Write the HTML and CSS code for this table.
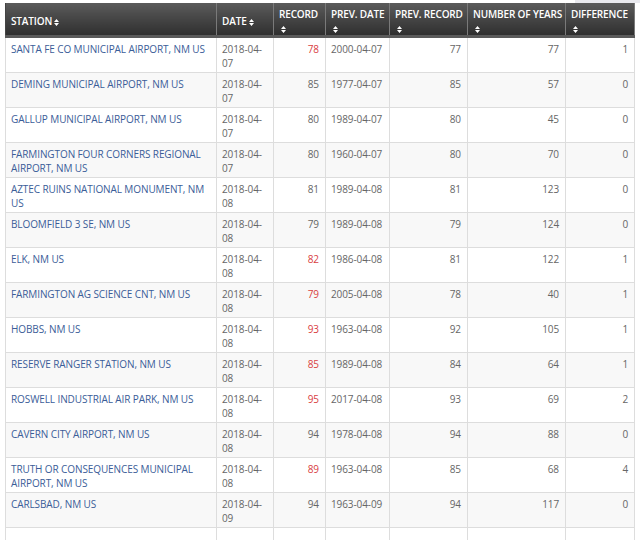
FILE: index.html
```html
<!DOCTYPE html>
<html>
<head>
<meta charset="utf-8">
<link rel="stylesheet" href="styles.css">
</head>
<body>
<div class="topstrip"></div>
<table class="records">
  <colgroup>
    <col class="c-station"><col class="c-date"><col class="c-rec"><col class="c-pdate"><col class="c-prec"><col class="c-years"><col class="c-diff">
  </colgroup>
  <thead>
    <tr>
      <th><span class="lbl">STATION<span class="sort"><svg width="5" height="7" viewBox="0 0 5 7"><path d="M2.5 0 L5 3 H0 Z M0 4 H5 L2.5 7 Z" fill="#fff"/></svg></span></span></th>
      <th><span class="lbl">DATE<span class="sort"><svg width="5" height="7" viewBox="0 0 5 7"><path d="M2.5 0 L5 3 H0 Z M0 4 H5 L2.5 7 Z" fill="#fff"/></svg></span></span></th>
      <th><span class="lbl">RECORD</span> <span class="sort"><svg width="5" height="7" viewBox="0 0 5 7"><path d="M2.5 0 L5 3 H0 Z M0 4 H5 L2.5 7 Z" fill="#fff"/></svg></span></th>
      <th><span class="lbl">PREV. DATE</span> <span class="sort"><svg width="5" height="7" viewBox="0 0 5 7"><path d="M2.5 0 L5 3 H0 Z M0 4 H5 L2.5 7 Z" fill="#fff"/></svg></span></th>
      <th><span class="lbl">PREV. RECORD</span> <span class="sort"><svg width="5" height="7" viewBox="0 0 5 7"><path d="M2.5 0 L5 3 H0 Z M0 4 H5 L2.5 7 Z" fill="#fff"/></svg></span></th>
      <th><span class="lbl">NUMBER OF YEARS</span> <span class="sort"><svg width="5" height="7" viewBox="0 0 5 7"><path d="M2.5 0 L5 3 H0 Z M0 4 H5 L2.5 7 Z" fill="#fff"/></svg></span></th>
      <th><span class="lbl">DIFFERENCE</span> <span class="sort"><svg width="5" height="7" viewBox="0 0 5 7"><path d="M2.5 0 L5 3 H0 Z M0 4 H5 L2.5 7 Z" fill="#fff"/></svg></span></th>
    </tr>
  </thead>
  <tbody>
    <tr><td><a>SANTA FE CO MUNICIPAL AIRPORT, NM US</a></td><td>2018-04-07</td><td class="num hot">78</td><td>2000-04-07</td><td class="num">77</td><td class="num">77</td><td class="num">1</td></tr>
    <tr><td><a>DEMING MUNICIPAL AIRPORT, NM US</a></td><td>2018-04-07</td><td class="num">85</td><td>1977-04-07</td><td class="num">85</td><td class="num">57</td><td class="num">0</td></tr>
    <tr><td><a>GALLUP MUNICIPAL AIRPORT, NM US</a></td><td>2018-04-07</td><td class="num">80</td><td>1989-04-07</td><td class="num">80</td><td class="num">45</td><td class="num">0</td></tr>
    <tr><td><a>FARMINGTON FOUR CORNERS REGIONAL AIRPORT, NM US</a></td><td>2018-04-07</td><td class="num">80</td><td>1960-04-07</td><td class="num">80</td><td class="num">70</td><td class="num">0</td></tr>
    <tr><td><a>AZTEC RUINS NATIONAL MONUMENT, NM US</a></td><td>2018-04-08</td><td class="num">81</td><td>1989-04-08</td><td class="num">81</td><td class="num">123</td><td class="num">0</td></tr>
    <tr><td><a>BLOOMFIELD 3 SE, NM US</a></td><td>2018-04-08</td><td class="num">79</td><td>1989-04-08</td><td class="num">79</td><td class="num">124</td><td class="num">0</td></tr>
    <tr><td><a>ELK, NM US</a></td><td>2018-04-08</td><td class="num hot">82</td><td>1986-04-08</td><td class="num">81</td><td class="num">122</td><td class="num">1</td></tr>
    <tr><td><a>FARMINGTON AG SCIENCE CNT, NM US</a></td><td>2018-04-08</td><td class="num hot">79</td><td>2005-04-08</td><td class="num">78</td><td class="num">40</td><td class="num">1</td></tr>
    <tr><td><a>HOBBS, NM US</a></td><td>2018-04-08</td><td class="num hot">93</td><td>1963-04-08</td><td class="num">92</td><td class="num">105</td><td class="num">1</td></tr>
    <tr><td><a>RESERVE RANGER STATION, NM US</a></td><td>2018-04-08</td><td class="num hot">85</td><td>1989-04-08</td><td class="num">84</td><td class="num">64</td><td class="num">1</td></tr>
    <tr><td><a>ROSWELL INDUSTRIAL AIR PARK, NM US</a></td><td>2018-04-08</td><td class="num hot">95</td><td>2017-04-08</td><td class="num">93</td><td class="num">69</td><td class="num">2</td></tr>
    <tr><td><a>CAVERN CITY AIRPORT, NM US</a></td><td>2018-04-08</td><td class="num">94</td><td>1978-04-08</td><td class="num">94</td><td class="num">88</td><td class="num">0</td></tr>
    <tr><td><a>TRUTH OR CONSEQUENCES MUNICIPAL AIRPORT, NM US</a></td><td>2018-04-08</td><td class="num hot">89</td><td>1963-04-08</td><td class="num">85</td><td class="num">68</td><td class="num">4</td></tr>
    <tr><td><a>CARLSBAD, NM US</a></td><td>2018-04-09</td><td class="num">94</td><td>1963-04-09</td><td class="num">94</td><td class="num">117</td><td class="num">0</td></tr>
    <tr><td>&nbsp;</td><td>&nbsp;</td><td></td><td></td><td></td><td></td><td></td></tr>
  </tbody>
</table>
</body>
</html>
```
FILE: styles.css
```css
html, body {
  margin: 0;
  padding: 0;
  background: #fff;
}
body {
  font-family: "Open Sans", "Liberation Sans", sans-serif;
  font-size: 10px;
  color: #666;
  overflow: hidden;
  height: 540px;
}
.topstrip {
  height: 3px;
  margin-left: 575px;
  background: #e9e9ee;
}
.records {
  margin-left: 5px;
  width: 629px;
  table-layout: fixed;
  border-collapse: collapse;
}
.c-station { width: 211px; }
.c-date { width: 57px; }
.c-rec { width: 52px; }
.c-pdate { width: 64px; }
.c-prec { width: 78px; }
.c-years { width: 98px; }
.c-diff { width: 69px; }

.records th {
  background: linear-gradient(#5b5b5b, #2f2f2f);
  border-left: 1px solid #7a7a7a;
  border-right: 1px solid #7a7a7a;
  border-bottom: 3px solid #5a5a5a;
  color: #fff;
  font-weight: 600;
  text-align: left;
  vertical-align: middle;
  padding: 4px 4px 0 5px;
  height: 27px;
  line-height: 14px;
  letter-spacing: -0.15px;
}
.records th:first-child { border-left-color: #444; }
.lbl { white-space: nowrap; }
.sort {
  display: inline-block;
  margin-left: 2px;
  vertical-align: -1px;
}
.sort svg { display: block; }

.records td {
  border: 1px solid #dddddd;
  padding: 4px 5px 2px 5px;
  vertical-align: top;
  line-height: 14px;
  height: 28px;
  letter-spacing: -0.1px;
}
.records tbody tr:nth-child(even) td { background: #f8f8f8; }
.records a {
  color: #3b5d98;
  text-decoration: none;
}
.records td.num { text-align: right; padding-right: 6px; }
.records td.hot { color: #d9403f; }
```
